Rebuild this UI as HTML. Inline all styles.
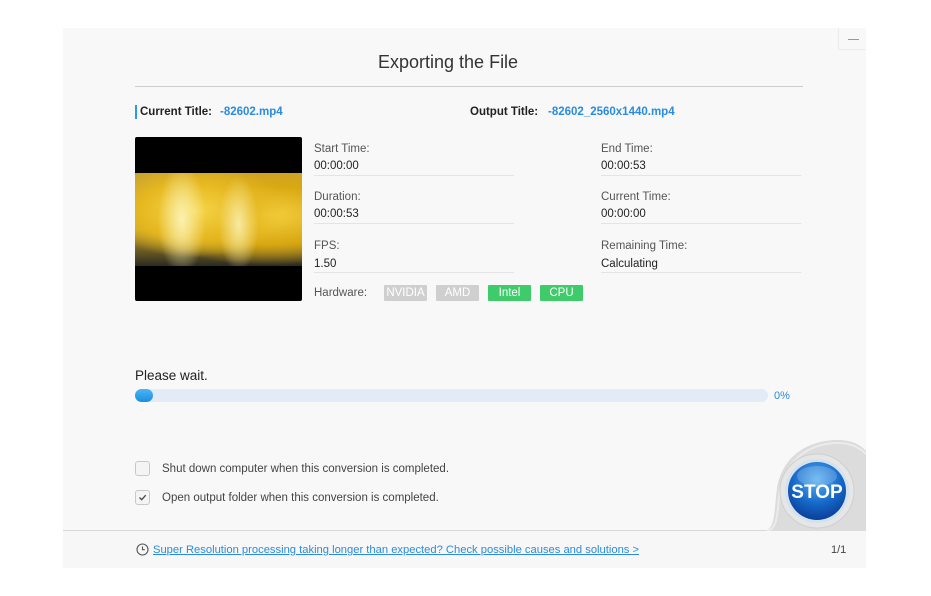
<!DOCTYPE html>
<html><head><meta charset="utf-8"><style>
*{margin:0;padding:0;box-sizing:border-box}
body{width:931px;height:596px;background:#fff;font-family:"Liberation Sans","DejaVu Sans",sans-serif;position:relative;overflow:hidden;color:#333}
.panel{position:absolute;left:63px;top:28px;width:803px;height:540px;background:#f8f8f8}
.a{position:absolute;white-space:nowrap}
.min{position:absolute;left:838px;top:28px;width:28px;height:22px;border-left:1px solid #ececec;border-bottom:1px solid #ececec}
.min:after{content:"";position:absolute;left:9px;top:11px;width:11px;height:1px;background:#999}
.lbl{font-size:11.5px;color:#555}
.val{font-size:11.5px;color:#222}
.ln{position:absolute;height:1px;background:#e4e4e4;width:200px}
.hw{position:absolute;top:285px;height:16px;font-size:11.5px;color:#fff;text-align:center;line-height:16px;border-radius:1px}
.cb{position:absolute;left:135px;width:15px;height:15px;border:1px solid #c8c8c8;border-radius:3px;background:#f4f4f4}
</style></head><body>
<div class="panel"></div>
<div class="min"></div>
<div class="a" style="left:378px;top:52px;font-size:18px;color:#333">Exporting the File</div>
<div class="a" style="left:135px;top:86px;width:668px;height:1px;background:#ccc"></div>
<div class="a" style="left:135px;top:105px;width:2px;height:14px;background:#2a9be6"></div>
<div class="a" style="left:140px;top:106px;font-size:11.5px;font-weight:bold;color:#222">Current Title:</div>
<div class="a" style="left:220px;top:106px;font-size:11.5px;font-weight:bold;color:#2a8be0">-82602.mp4</div>
<div class="a" style="left:470px;top:106px;font-size:11.5px;font-weight:bold;color:#222">Output Title:</div>
<div class="a" style="left:548px;top:106px;font-size:11.5px;font-weight:bold;color:#2a8be0">-82602_2560x1440.mp4</div>
<div class="a" style="left:135px;top:137px;width:167px;height:164px;background:#000;border-radius:2px;overflow:hidden">
 <div style="position:absolute;left:0;top:36px;width:167px;height:93px;background:radial-gradient(ellipse 30px 70px at 28% 50%,#fbf1b0 0%,transparent 80%),radial-gradient(ellipse 25px 60px at 62% 55%,#f8eaa0 0%,transparent 80%),radial-gradient(ellipse at 35% 40%,#f6d54a 0%,#e6b820 35%,transparent 60%),radial-gradient(ellipse at 80% 45%,#f4d040 0%,#d9a812 40%,transparent 70%),linear-gradient(180deg,#c8a030,#caa226 60%,#2a2a22)"></div>
</div>
<div class="a lbl" style="left:314px;top:143px">Start Time:</div>
<div class="a val" style="left:314px;top:160px">00:00:00</div>
<div class="ln" style="left:314px;top:175px"></div>
<div class="a lbl" style="left:314px;top:191px">Duration:</div>
<div class="a val" style="left:314px;top:208px">00:00:53</div>
<div class="ln" style="left:314px;top:223px"></div>
<div class="a lbl" style="left:314px;top:240px">FPS:</div>
<div class="a val" style="left:314px;top:258px">1.50</div>
<div class="ln" style="left:314px;top:272px"></div>
<div class="a lbl" style="left:601px;top:143px">End Time:</div>
<div class="a val" style="left:601px;top:160px">00:00:53</div>
<div class="ln" style="left:601px;top:175px"></div>
<div class="a lbl" style="left:601px;top:191px">Current Time:</div>
<div class="a val" style="left:601px;top:208px">00:00:00</div>
<div class="ln" style="left:601px;top:223px"></div>
<div class="a lbl" style="left:601px;top:240px">Remaining Time:</div>
<div class="a val" style="left:601px;top:258px">Calculating</div>
<div class="ln" style="left:601px;top:272px"></div>
<div class="a lbl" style="left:314px;top:287px">Hardware:</div>
<div class="hw" style="left:384px;width:43px;background:#cfcfcf">NVIDIA</div>
<div class="hw" style="left:436px;width:43px;background:#cfcfcf">AMD</div>
<div class="hw" style="left:488px;width:43px;background:#3fcb6a">Intel</div>
<div class="hw" style="left:540px;width:43px;background:#3fcb6a">CPU</div>
<div class="a" style="left:135px;top:368px;font-size:13.5px;color:#222">Please wait.</div>
<div class="a" style="left:135px;top:389px;width:633px;height:13px;background:#e3ecf6;border-radius:7px"></div>
<div class="a" style="left:135px;top:389px;width:18px;height:13px;background:linear-gradient(#4ab4f5,#1c8fe0);border-radius:7px"></div>
<div class="a" style="left:774px;top:390px;font-size:11px;color:#2a8be0">0%</div>
<div class="cb" style="top:461px"></div>
<div class="a" style="left:162px;top:463px;font-size:11.5px;color:#444">Shut down computer when this conversion is completed.</div>
<div class="cb" style="top:490px"><svg width="13" height="13" style="position:absolute;left:0;top:0"><path d="M3.5 6.5l2.2 2.2 4-4.5" stroke="#444" stroke-width="1.3" fill="none"/></svg></div>
<div class="a" style="left:162px;top:492px;font-size:11.5px;color:#444">Open output folder when this conversion is completed.</div>
<div class="a" style="left:63px;top:530px;width:803px;height:1px;background:#d8d8d8"></div>
<div class="a" style="left:63px;top:531px;width:803px;height:37px;background:#f7f7f7"></div>
<svg class="a" style="left:136px;top:543px" width="13" height="13"><circle cx="6.5" cy="6.5" r="5.5" stroke="#555" fill="none" stroke-width="1.1"/><path d="M6.5 3.5v3.2h2.3" stroke="#555" fill="none" stroke-width="1.1"/></svg>
<div class="a" style="left:153px;top:544px;font-size:11.2px;color:#2a8be0;text-decoration:underline">Super Resolution processing taking longer than expected? Check possible causes and solutions &gt;</div>
<div class="a" style="left:831px;top:544px;font-size:11px;color:#444">1/1</div>
<svg class="a" style="left:762px;top:438px" width="104" height="93">
<path d="M2 93 C14 92 12 70 15 50 C21 16 48 2 76 2 C90 2 99 7 104 13 L104 93 Z" fill="#dcdcdc"/>
<path d="M5 93 C17 91 15 70 18 52 C24 20 50 5 76 5 C89 5 98 10 104 16" fill="none" stroke="#ebebeb" stroke-width="2"/>
<circle cx="55" cy="53" r="37" fill="#e6e6e6" stroke="#cfcfcf"/>
<circle cx="55" cy="53" r="32" fill="#d2e2ee"/>
<defs><radialGradient id="g" cx="50%" cy="30%" r="70%"><stop offset="0" stop-color="#5ab0f2"/><stop offset="0.6" stop-color="#1568c8"/><stop offset="1" stop-color="#0c3f98"/></radialGradient></defs>
<circle cx="55" cy="53" r="29" fill="url(#g)"/>
<ellipse cx="55" cy="38" rx="20" ry="10" fill="#fff" opacity="0.18"/>
<text x="55" y="60" text-anchor="middle" font-family="Liberation Sans,sans-serif" font-weight="bold" font-size="19" fill="#fff">STOP</text>
</svg>
</body></html>
